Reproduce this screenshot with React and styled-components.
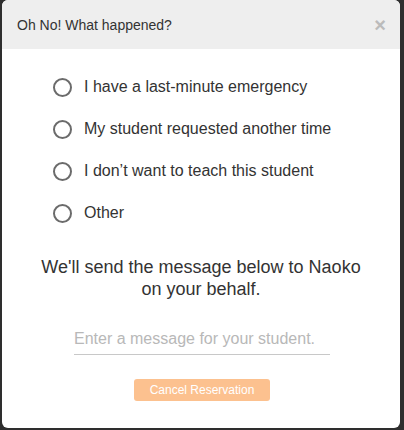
import styled, { createGlobalStyle } from 'styled-components';

const GlobalStyle = createGlobalStyle`
  html, body {
    margin: 0;
    padding: 0;
    background: #2e2e2e;
  }
  * {
    box-sizing: border-box;
  }
`;

const Page = styled.div`
  padding: 0 4px 2px 2px;
  height: 430px;
`;

const Dialog = styled.div`
  height: 428px;
  background: #ffffff;
  border-radius: 6px;
  overflow: hidden;
  display: flex;
  flex-direction: column;
  font-family: "Liberation Sans", Arial, sans-serif;
  color: #333333;
`;

const Header = styled.div`
  height: 49px;
  background: #eeeeee;
  display: flex;
  align-items: center;
  justify-content: space-between;
  padding: 0 14px 0 15px;
`;

const Title = styled.h4`
  margin: 0;
  font-size: 14px;
  font-weight: normal;
  color: #333333;
`;

const Close = styled.button`
  border: none;
  background: none;
  padding: 0;
  font-size: 20px;
  line-height: 1;
  font-weight: bold;
  color: #bbbbbb;
  font-family: "Liberation Sans", Arial, sans-serif;
  cursor: pointer;
`;

const Body = styled.div`
  padding: 27px 20px 0 51px;
  display: flex;
  flex-direction: column;
`;

const Options = styled.div`
  display: flex;
  flex-direction: column;
  gap: 20px;
`;

const Option = styled.label`
  display: flex;
  align-items: center;
  gap: 12px;
  font-size: 16px;
  line-height: 22px;
  color: #333333;
  cursor: pointer;
`;

const Radio = styled.span`
  width: 19px;
  height: 19px;
  border: 2px solid #6b6b6b;
  border-radius: 50%;
  flex: none;
`;

const Message = styled.p`
  margin: 32px -20px 0 -51px;
  text-align: center;
  font-size: 18px;
  line-height: 22px;
  color: #333333;
`;

const Field = styled.input`
  margin: 30px 0 0 21px;
  width: 256px;
  border: none;
  border-bottom: 1px solid #c8c8c8;
  padding: 0 0 6px;
  font-size: 16px;
  font-family: "Liberation Sans", Arial, sans-serif;
  color: #333333;
  outline: none;
  &::placeholder {
    color: #b8b8b8;
  }
`;

const Submit = styled.button`
  align-self: flex-start;
  margin: 24px 0 0 81px;
  width: 136px;
  height: 22px;
  border: none;
  border-radius: 3px;
  background: #fcc18f;
  color: #ffffff;
  font-size: 12px;
  font-family: "Liberation Sans", Arial, sans-serif;
  padding: 0;
`;

const reasons = [
  'I have a last-minute emergency',
  'My student requested another time',
  'I don\u2019t want to teach this student',
  'Other',
];

const App = () => (
  <Page>
    <GlobalStyle />
    <Dialog>
      <Header>
        <Title>Oh No! What happened?</Title>
        <Close aria-label="Close">×</Close>
      </Header>
      <Body>
        <Options>
          {reasons.map((r) => (
            <Option key={r}>
              <Radio />
              {r}
            </Option>
          ))}
        </Options>
        <Message>
          We'll send the message below to Naoko
          <br />
          on your behalf.
        </Message>
        <Field placeholder="Enter a message for your student." />
        <Submit>Cancel Reservation</Submit>
      </Body>
    </Dialog>
  </Page>
);

export default App;
